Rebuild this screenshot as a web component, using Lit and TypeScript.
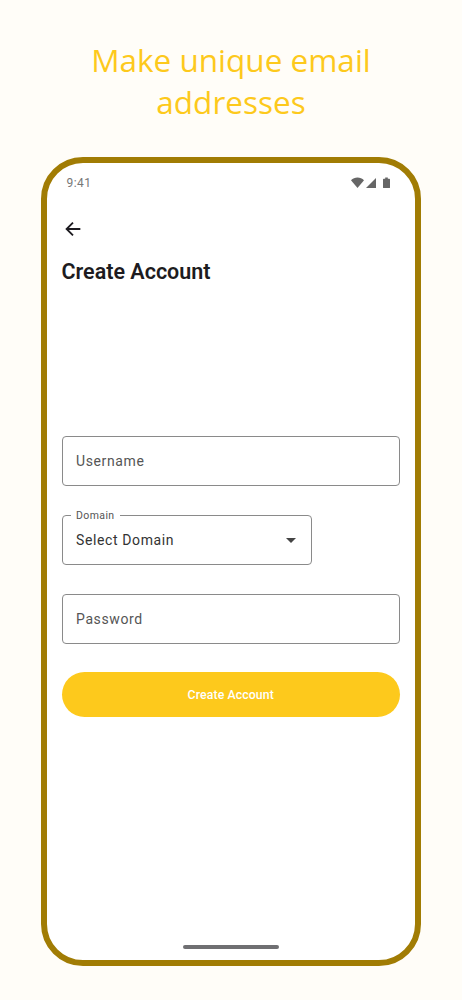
import { LitElement, html, css } from "lit";
import { customElement } from "lit/decorators.js";

@customElement("app-root")
export class AppRoot extends LitElement {
  static styles = css`
    :host { display: block; width: 462px; height: 1000px; background: #fffdf8; overflow: hidden; font-family: Roboto, sans-serif; }
    h1 { margin: 0; padding: 39px 60px 0; height: 157px; box-sizing: border-box; font: 400 31.5px/42px "Open Sans", sans-serif; color: #fdc91c; text-align: center; }
    .phone { margin: 0 41px; height: 809px; box-sizing: border-box; border: 6.5px solid #a17c04; border-radius: 42px; background: #fff; display: flex; flex-direction: column; padding: 0 15px 0 14.5px; position: relative; }
    .status { display: flex; justify-content: space-between; align-items: center; height: 39px; padding: 0 10px 0 5px; font-size: 12px; letter-spacing: .45px; color: #777; }
    .status svg { display: block; }
    .back { display: block; margin: 16px 0 0 0; }
    h2 { margin: 18px 0 0; font: 600 21.5px/28px Roboto, sans-serif; color: #1d1b20; }
    .form { margin-top: 150px; display: flex; flex-direction: column; gap: 29px; }
    .field { box-sizing: border-box; height: 50px; border: 1px solid #8a8a8a; border-radius: 4px; padding: 0 13.5px; display: flex; align-items: center; justify-content: space-between; font-size: 14px; letter-spacing: .62px; color: #555; position: relative; }
    .select { width: 250px; color: #333; }
    .legend { position: absolute; left: 8.5px; top: -7px; padding: 0 5px; background: #fff; font-size: 10.5px; line-height: 13px; letter-spacing: .4px; color: #555; }
    .caret { width: 0; height: 0; border: 5px solid transparent; border-top-color: #444; border-bottom: 0; margin-right: 1px; }
    .button { height: 45px; margin-top: -1px; border-radius: 23px; background: #fdc91c; color: #fff; font-size: 12.3px; font-weight: 500; display: flex; align-items: center; justify-content: center; letter-spacing: .1px; }
    .home { position: absolute; left: 135.5px; bottom: 11.5px; width: 96px; height: 3.5px; border-radius: 2px; background: #6f6f72; }
  `;

  render() {
    return html`
      <h1>Make unique email addresses</h1>
      <div class="phone">
        <div class="status">
          <span>9:41</span>
          <svg width="39" height="12" viewBox="0 0 39 12" fill="#666">
            <path d="M0 3.2C1.8 1.4 4 .6 6.5.6S11.2 1.4 13 3.2L6.5 11Z"/>
            <path d="M15 11 25 1V11Z"/>
            <path d="M32 2.4C32 2 32.3 1.7 32.7 1.7H34.2V.6H36.8V1.7H38.3C38.7 1.7 39 2 39 2.4V10.4C39 10.8 38.7 11 38.3 11H32.7C32.3 11 32 10.8 32 10.4Z"/>
          </svg>
        </div>
        <svg class="back" width="22" height="22" viewBox="0 0 24 24" fill="none" stroke="#1d1b20" stroke-width="2">
          <path d="M20 12H5M12 5l-7 7 7 7"/>
        </svg>
        <h2>Create Account</h2>
        <div class="form">
          <div class="field">Username</div>
          <div class="field select">
            <span class="legend">Domain</span>
            Select Domain
            <span class="caret"></span>
          </div>
          <div class="field">Password</div>
          <div class="button">Create Account</div>
        </div>
        <div class="home"></div>
      </div>
    `;
  }
}
